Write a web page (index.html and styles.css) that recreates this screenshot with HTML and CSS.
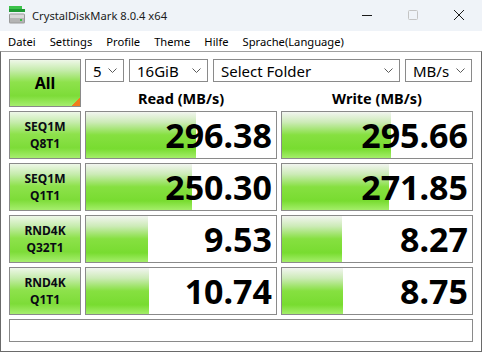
FILE: index.html
```html
<!DOCTYPE html>
<html lang="de">
<head>
  <meta charset="UTF-8">
  <title>CrystalDiskMark 8.0.4 x64</title>
  <link rel="stylesheet" href="styles.css">
</head>
<body>

<div class="titlebar">
  <svg class="app-icon" width="18" height="18" viewBox="0 0 18 18">
    <rect x="1" y="0" width="13" height="3" fill="#3cc24a"/>
    <rect x="1" y="3" width="16" height="3" fill="#1f9a34"/>
    <rect x="1" y="7.5" width="16" height="10" rx="1.5" fill="#9a9a9a"/>
    <rect x="2" y="8.5" width="14" height="4" fill="#d8d8d8"/>
    <rect x="2" y="12.5" width="14" height="4" fill="#b4b4b4"/>
    <rect x="12" y="13" width="2" height="2" fill="#36c040"/>
  </svg>
  <span class="title">CrystalDiskMark 8.0.4 x64</span>
  <div class="controls">
    <svg width="46" height="31" viewBox="0 0 46 31"><line x1="18" y1="15.5" x2="28" y2="15.5" stroke="#1a1a1a" stroke-width="1"/></svg>
    <svg width="46" height="31" viewBox="0 0 46 31"><rect x="18.5" y="10.5" width="9" height="9" rx="1" fill="none" stroke="#c4c4c4" stroke-width="1"/></svg>
    <svg width="46" height="31" viewBox="0 0 46 31"><path d="M18 10 L28 20 M28 10 L18 20" stroke="#1a1a1a" stroke-width="1"/></svg>
  </div>
</div>

<nav class="menubar">
  <span>Datei</span>
  <span>Settings</span>
  <span>Profile</span>
  <span>Theme</span>
  <span>Hilfe</span>
  <span>Sprache(Language)</span>
</nav>

<main class="panel">
  <div class="grid">
    <div class="all">All</div>

    <div class="selects">
      <div class="select sel-count">5<svg width="9" height="5" viewBox="0 0 9 5"><polyline points="0.5,0.5 4.5,4.5 8.5,0.5" fill="none" stroke="#5a5a5a"/></svg></div>
      <div class="select sel-size">16GiB<svg width="9" height="5" viewBox="0 0 9 5"><polyline points="0.5,0.5 4.5,4.5 8.5,0.5" fill="none" stroke="#5a5a5a"/></svg></div>
      <div class="select sel-folder">Select Folder<svg width="9" height="5" viewBox="0 0 9 5"><polyline points="0.5,0.5 4.5,4.5 8.5,0.5" fill="none" stroke="#5a5a5a"/></svg></div>
      <div class="select sel-unit">MB/s<svg width="9" height="5" viewBox="0 0 9 5"><polyline points="0.5,0.5 4.5,4.5 8.5,0.5" fill="none" stroke="#5a5a5a"/></svg></div>
    </div>

    <div class="head">Read (MB/s)</div>
    <div class="head">Write (MB/s)</div>

    <div class="label">SEQ1M<br>Q8T1</div>
    <div class="cell"><div class="bar" style="width:58%"></div><div class="value">296.38</div></div>
    <div class="cell"><div class="bar" style="width:57.5%"></div><div class="value">295.66</div></div>

    <div class="label">SEQ1M<br>Q1T1</div>
    <div class="cell"><div class="bar" style="width:56%"></div><div class="value">250.30</div></div>
    <div class="cell"><div class="bar" style="width:56.5%"></div><div class="value">271.85</div></div>

    <div class="label">RND4K<br>Q32T1</div>
    <div class="cell"><div class="bar" style="width:32.5%"></div><div class="value">9.53</div></div>
    <div class="cell"><div class="bar" style="width:31.5%"></div><div class="value">8.27</div></div>

    <div class="label">RND4K<br>Q1T1</div>
    <div class="cell"><div class="bar" style="width:33%"></div><div class="value">10.74</div></div>
    <div class="cell"><div class="bar" style="width:32%"></div><div class="value">8.75</div></div>

    <div class="comment"></div>
  </div>
</main>

</body>
</html>
```

FILE: styles.css
```css
* {
  box-sizing: border-box;
}

body {
  margin: 0;
  width: 482px;
  height: 352px;
  overflow: hidden;
  font-family: 'Noto Sans', sans-serif;
  background: #ffffff;
  color: #000;
}

.titlebar {
  height: 31px;
  background: #eff3f8;
  display: flex;
  align-items: center;
}

.app-icon {
  margin-left: 8px;
  margin-top: -1px;
}

.title {
  margin-left: 6px;
  font-size: 11.2px;
  color: #1a1a1a;
}

.controls {
  margin-left: auto;
  display: flex;
}

.controls svg {
  display: block;
}

.menubar {
  height: 20px;
  background: #ffffff;
  display: flex;
  align-items: center;
  padding-left: 8px;
  gap: 14px;
  font-size: 11.2px;
}

.panel {
  height: 301px;
  border: 1px solid #6a6a6a;
  border-top-color: #a0a0a0;
  padding: 7px 8px 0 8px;
}

.grid {
  display: grid;
  grid-template-columns: 72px 192px 192px;
  grid-template-rows: 23px 21px 48px 48px 48px 48px 23px;
  gap: 4px;
}

.all {
  grid-row: 1 / span 2;
  border: 1px solid #8a8a8a;
  background:
    linear-gradient(135deg, transparent 50%, #f07c1c 50%) right bottom / 8px 8px no-repeat,
    linear-gradient(to bottom, #eef7e8 0%, #c6ecad 22%, #8ee24c 48%, #7ddc38 78%, #a6ee6e 100%);
  display: flex;
  align-items: center;
  justify-content: center;
  font-size: 16px;
  font-weight: bold;
}

.selects {
  grid-column: 2 / span 2;
  display: flex;
  gap: 5px;
}

.select {
  height: 23px;
  border: 1px solid #8a8a8a;
  background: #fff;
  font-size: 15px;
  display: flex;
  align-items: center;
  justify-content: space-between;
  padding: 0 6px 0 7px;
}

.select svg {
  flex-shrink: 0;
}

.sel-count  { width: 39px; }
.sel-size   { width: 79px; }
.sel-folder { width: 187px; }
.sel-unit   { width: 67px; }

.head {
  font-size: 14.5px;
  font-weight: bold;
  text-align: center;
  line-height: 17px;
  padding-top: 4px;
}

.label {
  border: 1px solid #8a8a8a;
  background: linear-gradient(to bottom, #eef7e8 0%, #c6ecad 22%, #8ee24c 48%, #7ddc38 78%, #a6ee6e 100%);
  display: flex;
  align-items: center;
  justify-content: center;
  text-align: center;
  font-size: 12px;
  font-weight: bold;
  line-height: 17px;
  color: #0a0a14;
}

.cell {
  border: 1px solid #8a8a8a;
  background: #fff;
  display: grid;
}

.bar {
  grid-area: 1 / 1;
  height: 100%;
  background: linear-gradient(to bottom, #f2f5f0 0%, #cdebb8 22%, #86e040 50%, #78dc30 80%, #a4ee6a 100%);
}

.value {
  grid-area: 1 / 1;
  align-self: center;
  text-align: right;
  padding-right: 4px;
  font-size: 34px;
  font-weight: bold;
  line-height: 1;
}

.comment {
  grid-column: 1 / span 3;
  border: 1px solid #8a8a8a;
  background: #fff;
}
```
